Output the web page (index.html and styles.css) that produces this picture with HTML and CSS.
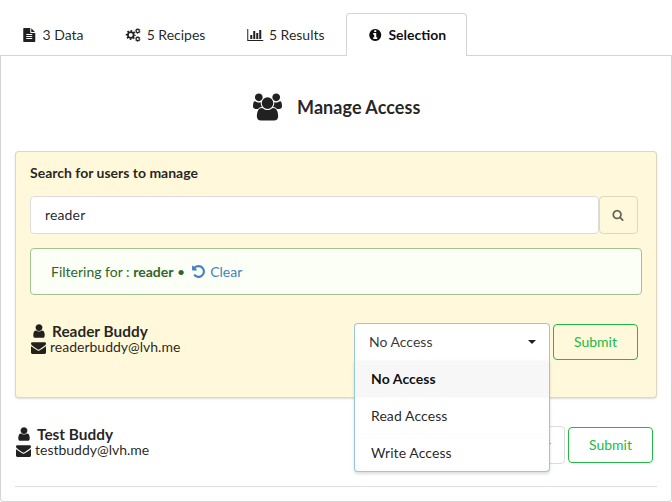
FILE: index.html
```html
<!DOCTYPE html>
<html lang="en">
<head>
<meta charset="utf-8">
<title>Manage Access</title>
<link rel="stylesheet" href="styles.css">
</head>
<body>
<svg class="sprite" aria-hidden="true">
  <symbol id="user" viewBox="0 0 1792 1792"><path d="M1536 1399q0 109-62.5 187t-150.5 78h-854q-88 0-150.5-78t-62.5-187q0-85 8.5-160.5t31.5-152 58.5-131 94-89 134.5-34.5q131 128 313 128t313-128q76 0 134.5 34.5t94 89 58.5 131 31.5 152 8.5 160.5zm-256-887q0 159-112.5 271.5t-271.5 112.5-271.5-112.5-112.5-271.5 112.5-271.5 271.5-112.5 271.5 112.5 112.5 271.5z"/></symbol>
  <symbol id="envelope" viewBox="0 0 1792 1792"><path d="M1792 710v794q0 66-47 113t-113 47h-1472q-66 0-113-47t-47-113v-794q44 49 101 87 362 246 497 345 57 42 92.5 65.5t94.5 48 110 24.5h2q51 0 110-24.5t94.5-48 92.5-65.5q170-123 498-345 57-39 100-87zm0-294q0 79-49 151t-122 123q-376 261-468 325-10 7-42.5 31t-54 38.5-52 32.5-57.5 27-50 9h-2q-23 0-50-9t-57.5-27-52-32.5-54-38.5-42.5-31q-91-64-262-182.5t-205-142.5q-62-42-117-115.5t-55-136.5q0-78 41.5-130t118.5-52h1472q65 0 112.5 47t47.5 113z"/></symbol>
</svg>

<nav class="tabs">
  <a class="tab"><svg class="icon" viewBox="0 0 1792 1792"><path d="M1596 476q14 14 28 36h-472v-472q22 14 36 28zm-476 164h544v1056q0 40-28 68t-68 28h-1344q-40 0-68-28t-28-68v-1600q0-40 28-68t68-28h800v544q0 40 28 68t68 28zm160 736v-64q0-14-9-23t-23-9h-704q-14 0-23 9t-9 23v64q0 14 9 23t23 9h704q14 0 23-9t9-23zm0-256v-64q0-14-9-23t-23-9h-704q-14 0-23 9t-9 23v64q0 14 9 23t23 9h704q14 0 23-9t9-23zm0-256v-64q0-14-9-23t-23-9h-704q-14 0-23 9t-9 23v64q0 14 9 23t23 9h704q14 0 23-9t9-23z"/></svg>3 Data</a>
  <a class="tab"><svg class="icon gears" viewBox="0 0 1920 1792"><circle cx="640" cy="896" r="370" stroke-width="230"/><circle class="teeth" cx="640" cy="896" r="545" stroke-width="190" pathLength="80"/><circle cx="1536" cy="384" r="205" stroke-width="150"/><circle class="teeth" cx="1536" cy="384" r="320" stroke-width="110" pathLength="80"/><circle cx="1536" cy="1408" r="205" stroke-width="150"/><circle class="teeth" cx="1536" cy="1408" r="320" stroke-width="110" pathLength="80"/></svg>5 Recipes</a>
  <a class="tab"><svg class="icon" viewBox="0 0 2048 1792"><path d="M640 896v512h-256v-512zm384-512v1024h-256v-1024zm1024 1152v128h-2048v-1536h128v1408zm-640-896v768h-256v-768zm384-384v1152h-256v-1152z"/></svg>5 Results</a>
  <a class="tab active"><svg class="icon" viewBox="0 0 1792 1792"><path d="M1152 1376v-160q0-14-9-23t-23-9h-96v-512q0-14-9-23t-23-9h-320q-14 0-23 9t-9 23v160q0 14 9 23t23 9h96v320h-96q-14 0-23 9t-9 23v160q0 14 9 23t23 9h448q14 0 23-9t9-23zm-128-896v-160q0-14-9-23t-23-9h-192q-14 0-23 9t-9 23v160q0 14 9 23t23 9h192q14 0 23-9t9-23zm640 416q0 209-103 385.5t-279.5 279.5-385.5 103-385.5-103-279.5-279.5-103-385.5 103-385.5 279.5-279.5 385.5-103 385.5 103 279.5 279.5 103 385.5z"/></svg>Selection</a>
</nav>

<main class="panel">
  <h1 class="title"><svg class="group" viewBox="0 0 1920 1792"><path d="M593 896q-162 5-265 128h-134q-82 0-138-40.5t-56-118.5q0-353 124-353 6 0 43.5 21t97.5 42.5 119 21.5q67 0 133-23-5 37-5 66 0 139 81 256zm1071 637q0 120-73 189.5t-194 69.5h-874q-121 0-194-69.5t-73-189.5q0-53 3.5-103.5t14-109 26.5-108.5 43-97.5 62-81 85.5-53.5 111.5-20q10 0 43 21.5t73 48 107 48 135 21.5 135-21.5 107-48 73-48 43-21.5q61 0 111.5 20t85.5 53.5 62 81 43 97.5 26.5 108.5 14 109 3.5 103.5zm-1024-1277q0 106-75 181t-181 75-181-75-75-181 75-181 181-75 181 75 75 181zm704 384q0 159-112.5 271.5t-271.5 112.5-271.5-112.5-112.5-271.5 112.5-271.5 271.5-112.5 271.5 112.5 112.5 271.5zm576 225q0 78-56 118.5t-138 40.5h-134q-103-123-265-128 81-117 81-256 0-29-5-66 66 23 133 23 59 0 119-21.5t97.5-42.5 43.5-21q124 0 124 353zm-128-609q0 106-75 181t-181 75-181-75-75-181 75-181 181-75 181 75 75 181z"/></svg>Manage Access</h1>

  <section class="search-box">
    <label class="label" for="q">Search for users to manage</label>
    <div class="search">
      <input id="q" class="input" type="text" value="reader">
      <button class="search-button" aria-label="Search"><svg class="search-icon" viewBox="0 0 1792 1792"><path d="M1216 832q0-185-131.5-316.5t-316.5-131.5-316.5 131.5-131.5 316.5 131.5 316.5 316.5 131.5 316.5-131.5 131.5-316.5zm512 832q0 52-38 90t-90 38q-54 0-90-38l-343-342q-179 124-399 124-143 0-273.5-55.5t-225-150-150-225-55.5-273.5 55.5-273.5 150-225 225-150 273.5-55.5 273.5 55.5 225 150 150 225 55.5 273.5q0 220-124 399l343 343q37 37 37 90z"/></svg></button>
    </div>
    <div class="message"><span>Filtering for : <b>reader</b> •</span><a class="clear"><svg class="icon" viewBox="0 0 1792 1792"><path d="M1664 896q0 156-61 298t-164 245-245 164-298 61q-172 0-327-72.5t-264-204.5q-7-10-6.5-22.5t8.5-20.5l137-138q10-9 25-9 16 2 23 12 73 95 179 147t225 52q104 0 198.5-40.5t163.5-109.5 109.5-163.5 40.5-198.5-40.5-198.5-109.5-163.5-163.5-109.5-198.5-40.5q-98 0-188 35.5t-160 101.5l137 138q31 30 14 69-17 40-59 40h-448q-26 0-45-19t-19-45v-448q0-42 40-59 39-17 69 14l130 129q107-101 244.5-156.5t284.5-55.5q156 0 298 61t245 164 164 245 61 298z"/></svg>Clear</a></div>
    <div class="row">
      <div class="person">
        <div class="name"><svg class="name-icon"><use href="#user"/></svg>Reader Buddy</div>
        <div class="mail"><svg class="mail-icon"><use href="#envelope"/></svg>readerbuddy@lvh.me</div>
      </div>
      <div class="dropdown open">
        <span>No Access</span><i class="caret"></i>
        <div class="menu">
          <div class="option selected">No Access</div>
          <div class="option">Read Access</div>
          <div class="option">Write Access</div>
        </div>
      </div>
      <button class="submit">Submit</button>
    </div>
  </section>

  <div class="row plain">
    <div class="person">
      <div class="name"><svg class="name-icon"><use href="#user"/></svg>Test Buddy</div>
      <div class="mail"><svg class="mail-icon"><use href="#envelope"/></svg>testbuddy@lvh.me</div>
    </div>
    <div class="dropdown"><span></span><i class="caret"></i></div>
    <button class="submit">Submit</button>
  </div>
  <hr class="divider">
</main>
</body>
</html>
```
FILE: styles.css
```css
* { box-sizing: border-box; }
html, body { height: 100%; overflow: hidden; }
body {
  margin: 0;
  background: #fff;
  color: rgba(0, 0, 0, .87);
  font: 14px/20px Lato, "Liberation Sans", sans-serif;
}
.sprite { display: none; }
svg { fill: currentColor; flex: none; }

.tabs { display: flex; padding-top: 13px; height: 56px; border-bottom: 1px solid #d4d4d5; }
.tab {
  display: flex;
  align-items: center;
  height: 43px;
  padding: 0 20px;
  border: 1px solid transparent;
  border-bottom: 0;
  white-space: nowrap;
}
.tab:nth-child(2) { margin-left: -.4px; }
.tab.active {
  margin-left: .4px;
  background: #fff;
  border-color: #d4d4d5;
  border-radius: 4px 4px 0 0;
  color: rgba(0, 0, 0, .95);
  font-weight: 700;
}
.icon { width: 16.5px; height: 14px; margin-right: 5px; }
.gears circle { fill: none; stroke: currentColor; }
.gears .teeth { stroke-dasharray: 5 5; stroke-dashoffset: 2.5; }

.panel {
  height: 446px;
  padding: 0 14px;
  border: 1px solid #d4d4d5;
  border-top: 0;
  border-radius: 0 0 4px 4px;
}
.title {
  display: flex;
  align-items: center;
  justify-content: center;
  height: 95px;
  margin: 0;
  padding: 7px 0 0 1px;
  font-size: 18px;
  font-weight: 700;
  letter-spacing: .05px;
}
.group { width: 29px; height: 28px; margin-right: 15.5px; }

.search-box {
  height: 247px;
  padding: 11px 14px;
  background: #fff8db;
  border: 1px solid rgba(34, 36, 38, .15);
  border-radius: 4px;
  box-shadow: 0 1px 2px rgba(34, 36, 38, .15);
}
.label { display: block; height: 33px; font-weight: 700; }
.search { display: flex; height: 38px; }
.input {
  width: 569px;
  padding: 0 14px;
  background: #fff;
  border: 1px solid #dbdcdd;
  border-radius: 4px;
  color: rgba(0, 0, 0, .87);
  font: inherit;
  letter-spacing: .15px;
  outline: 0;
}
.search-button {
  display: flex;
  align-items: center;
  justify-content: center;
  width: 39px;
  padding: 0 1px 0 0;
  background: transparent;
  border: 1px solid rgba(34, 36, 38, .15);
  border-radius: 4px;
  color: rgba(0, 0, 0, .6);
}
.search-icon { width: 12px; height: 12px; }
.message {
  display: flex;
  align-items: center;
  height: 47px;
  margin-top: 14px;
  padding: 0 20px;
  background: #fcfff5;
  border: 1px solid #a3c293;
  border-radius: 4px;
  color: #2c662d;
}
.clear { display: flex; align-items: center; margin-left: 5.5px; color: #4183c4; }
.clear .icon { width: 15px; height: 15px; margin-right: 4.5px; }

.row { display: flex; align-items: center; height: 38px; margin-top: 28px; }
.person { flex: 1; padding-bottom: 6px; line-height: 16px; }
.name { display: flex; align-items: center; height: 16px; font-size: 15.4px; font-weight: 700; }
.name-icon { width: 16px; height: 16px; margin: 0 5px 0 1px; }
.mail { display: flex; align-items: center; height: 16px; }
.mail-icon { width: 15px; height: 15px; margin: 0 4.5px 0 .5px; }
.dropdown {
  position: relative;
  display: flex;
  align-items: center;
  justify-content: space-between;
  width: 196px;
  height: 38px;
  margin-right: 3px;
  padding: 0 13px 0 14px;
  background: #fff;
  border: 1px solid #dbdcdd;
  border-radius: 4px;
  color: rgba(0, 0, 0, .8);
}
.dropdown.open { border-color: #96c8da; border-bottom-color: transparent; border-radius: 4px 4px 0 0; }
.caret { border: 4px solid transparent; border-top: 4px solid rgba(0, 0, 0, .87); border-bottom: 0; }
.menu {
  position: absolute;
  top: 36px;
  left: -1px;
  z-index: 2;
  width: 196px;
  background: #fff;
  border: 1px solid #96c8da;
  border-top: 0;
  border-radius: 0 0 4px 4px;
  box-shadow: 0 2px 3px rgba(34, 36, 38, .15);
  color: rgba(0, 0, 0, .87);
}
.option { height: 37px; padding: 0 16px; line-height: 36px; letter-spacing: .08px; border-top: 1px solid #fafafa; }
.option.selected { background: #f7f7f7; color: rgba(0, 0, 0, .95); font-weight: 700; }
.submit {
  width: 85px;
  height: 36px;
  padding: 0;
  background: transparent;
  border: 1px solid #21ba45;
  border-radius: 4px;
  color: #21ba45;
  font: inherit;
}
.search-box .submit { margin-right: 4px; }
.plain { padding-right: 4px; }
.divider { height: 1px; margin: 22px 0 0; border: 0; background: #dedede; }
```
